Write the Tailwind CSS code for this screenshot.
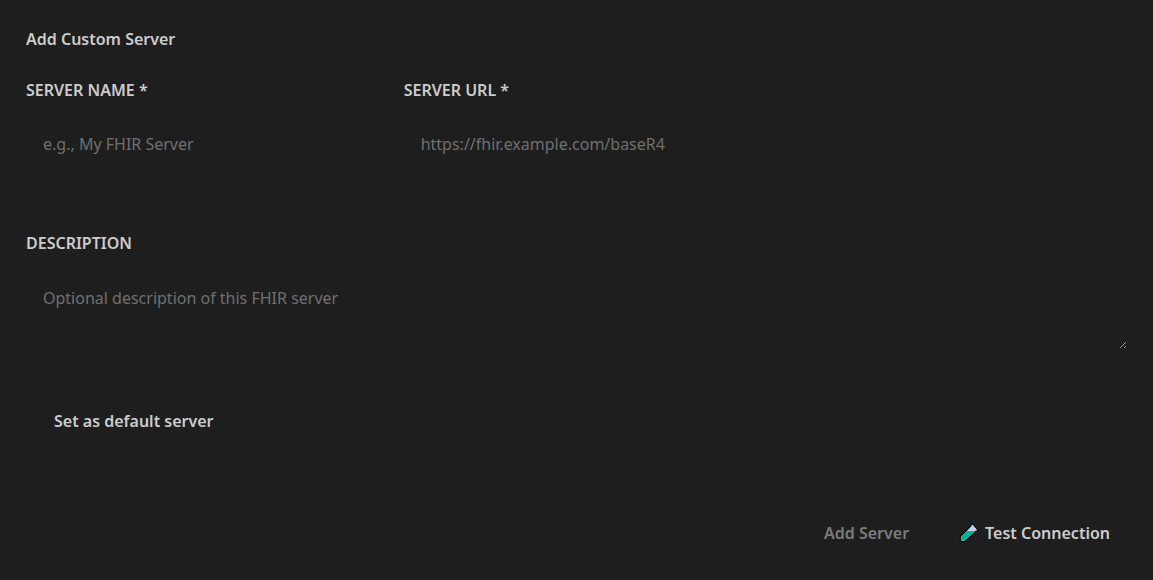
<!DOCTYPE html>
<html lang="en">
<head>
<meta charset="utf-8">
<meta name="viewport" content="width=device-width, initial-scale=1">
<title>Add Custom Server</title>
<script src="https://cdn.jsdelivr.net/npm/@tailwindcss/browser@4"></script>
</head>
<body class="min-h-screen bg-[#1e1e1e] text-[#cccccc] font-['Noto_Sans',sans-serif] text-[16px] leading-6">
<form class="px-[26px] pt-[27px] pb-6">
  <h3 class="font-semibold">Add Custom Server</h3>
  <div class="mt-[27px] grid grid-cols-3 gap-8">
    <div class="flex flex-col gap-3">
      <label for="name" class="font-semibold uppercase">Server Name *</label>
      <input id="name" type="text" placeholder="e.g., My FHIR Server" class="h-[60px] w-full bg-transparent px-[17px] outline-none placeholder:text-[#707070]">
    </div>
    <div class="flex flex-col gap-3">
      <label for="url" class="font-semibold uppercase">Server URL *</label>
      <input id="url" type="url" placeholder="https://fhir.example.com/baseR4" class="h-[60px] w-full bg-transparent px-[17px] outline-none placeholder:text-[#707070]">
    </div>
  </div>
  <div class="mt-[57px] flex flex-col gap-3">
    <label for="description" class="font-semibold uppercase">Description</label>
    <textarea id="description" placeholder="Optional description of this FHIR server" class="h-[82px] w-full resize-y scheme-dark bg-transparent px-[17px] py-[19px] outline-none placeholder:text-[#707070]"></textarea>
  </div>
  <div class="mt-[60px] flex items-center gap-3">
    <input id="default" type="checkbox" class="size-4 appearance-none">
    <label for="default" class="font-semibold">Set as default server</label>
  </div>
  <div class="mt-[76px] flex justify-end gap-4">
    <button type="submit" disabled class="h-12 px-[17px] font-semibold text-[#7c7c7c]">Add Server</button>
    <button type="button" class="flex h-12 items-center gap-[6px] px-[17px] font-semibold">
      <svg class="size-5" viewBox="0 0 20 20" aria-hidden="true">
        <path d="M12.3.8 14 1.4 18.3 6.2 19 7.8 17 8.2 6.6 17.8Q4 19.6 1.9 17.6 .3 15.4 2 13L11.7 3Z" fill="#b9d9f3" stroke="#080808" stroke-width="1.2" stroke-linejoin="round"/>
        <path d="M7.7 8H16.2L6.1 17.2Q4.1 18.4 2.5 17 1.4 15.2 2.6 13.4Z" fill="#00b294"/>
      </svg>
      Test Connection
    </button>
  </div>
</form>
</body>
</html>
